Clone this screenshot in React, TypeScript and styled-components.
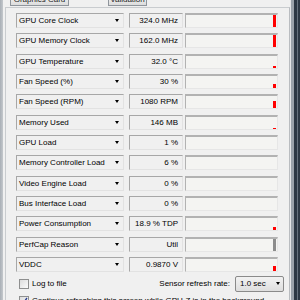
import React from 'react';
import styled, { createGlobalStyle } from 'styled-components';

const GlobalStyle = createGlobalStyle`
  html, body {
    margin: 0;
    padding: 0;
    background: #f0f0f0;
  }
  body {
    font-family: "Liberation Sans", Arial, sans-serif;
    font-size: 8px;
    color: #000;
  }
`;

const Window = styled.div`
  width: 300px;
  height: 300px;
  overflow: hidden;
  display: flex;
  background: #f0f0f0;
`;

const LeftFrame = styled.div`
  width: 3px;
  flex: none;
  background: linear-gradient(to right, #a9afb6, #c4c8cc);
`;

const RightFrame = styled.div`
  width: 10px;
  flex: none;
  display: flex;
`;

const FrameStripe = styled.div<{ $w: number; $c: string }>`
  width: ${(p) => p.$w}px;
  background: ${(p) => p.$c};
`;

const Main = styled.div`
  flex: 1;
  display: flex;
  flex-direction: column;
  padding-left: 2px;
`;

const TabStrip = styled.div`
  height: 7px;
  flex: none;
  display: flex;
  align-items: flex-start;
`;

const Tab = styled.div<{ $left: number; $width: number }>`
  margin-left: ${(p) => p.$left}px;
  width: ${(p) => p.$width}px;
  height: 5px;
  overflow: hidden;
  border: 1px solid #8f959c;
  border-top: none;
  background: linear-gradient(#e9e9e9, #dcdcdc);
  text-align: center;
  font-size: 8px;
`;

const TabText = styled.div`
  line-height: 8px;
  margin-top: -4px;
  color: #222;
`;

const Pane = styled.div`
  flex: 1;
  border-top: 1px solid #c9cccf;
  border-left: 1px solid #c9cccf;
  border-right: 1px solid #b9bcc0;
  padding: 5px 10px 0 10px;
  display: flex;
  flex-direction: column;
`;

const Rows = styled.div`
  display: flex;
  flex-direction: column;
  gap: 5.33px;
`;

const Row = styled.div`
  display: flex;
  height: 15px;
`;

const Sunken = styled.div`
  box-sizing: border-box;
  height: 15px;
  border-style: solid;
  border-width: 1px;
  border-color: #a7a7a7 #e2e2e2 #e2e2e2 #a7a7a7;
`;

const LabelBox = styled(Sunken)`
  width: 108px;
  display: flex;
  align-items: center;
  justify-content: space-between;
  padding: 0 4px 0 2px;
  background: #f0f0f0;
  white-space: nowrap;
`;

const Arrow = styled.span`
  width: 0;
  height: 0;
  border-left: 2.5px solid transparent;
  border-right: 2.5px solid transparent;
  border-top: 3px solid #000;
`;

const ValueBox = styled(Sunken)`
  width: 54px;
  margin-left: 5px;
  display: flex;
  align-items: center;
  justify-content: flex-end;
  padding-right: 4px;
  background: #f0f0f0;
  white-space: nowrap;
`;

const GraphBox = styled(Sunken)`
  width: 93px;
  margin-left: 2px;
  display: flex;
  align-items: flex-end;
  justify-content: flex-end;
  padding-right: 1px;
  background: #f4f4f2;
  border-top-width: 2px;
  border-color: #b2b2b2 #e6e6e6 #e6e6e6 #b2b2b2;
`;

const Bar = styled.div<{ $gray?: boolean }>`
  width: 3px;
  background: ${(p) => (p.$gray ? '#8c8c8c' : '#ff0000')};
`;

const Footer = styled.div`
  margin-top: 4px;
  display: flex;
  flex-direction: column;
  gap: 1px;
  padding-left: 3px;
`;

const FooterRow = styled.div`
  display: flex;
  align-items: center;
  justify-content: space-between;
  height: 16px;
`;

const CheckLabel = styled.label`
  display: flex;
  align-items: center;
  gap: 3px;
  white-space: nowrap;
`;

const CheckBox = styled.span`
  box-sizing: border-box;
  width: 10px;
  height: 10px;
  border: 1px solid #8e8f8f;
  background: linear-gradient(135deg, #dcdcdc, #fbfbfb);
  display: flex;
  align-items: center;
  justify-content: center;
`;

const Refresh = styled.div`
  display: flex;
  align-items: center;
  gap: 5px;
  margin-right: -5px;
`;

const Select = styled.div`
  box-sizing: border-box;
  width: 49px;
  height: 16px;
  border: 1px solid #8a8a8a;
  border-radius: 2px;
  background: linear-gradient(#f2f2f2, #dedede);
  display: flex;
  align-items: center;
  justify-content: space-between;
  padding: 0 3px 0 4px;
`;

const sensors = [
  { label: 'GPU Core Clock', value: '324.0 MHz', bar: 12 },
  { label: 'GPU Memory Clock', value: '162.0 MHz', bar: 12 },
  { label: 'GPU Temperature', value: '32.0 °C', bar: 2 },
  { label: 'Fan Speed (%)', value: '30 %', bar: 4 },
  { label: 'Fan Speed (RPM)', value: '1080 RPM', bar: 7 },
  { label: 'Memory Used', value: '146 MB', bar: 1 },
  { label: 'GPU Load', value: '1 %', bar: 0 },
  { label: 'Memory Controller Load', value: '6 %', bar: 0 },
  { label: 'Video Engine Load', value: '0 %', bar: 0 },
  { label: 'Bus Interface Load', value: '0 %', bar: 0 },
  { label: 'Power Consumption', value: '18.9 % TDP', bar: 3 },
  { label: 'PerfCap Reason', value: 'Util', bar: 12, gray: true },
  { label: 'VDDC', value: '0.9870 V', bar: 5 },
];

const Check = () => (
  <svg width="8" height="8" viewBox="0 0 8 8">
    <path d="M1 4.2 L3 6.5 L7 1" fill="none" stroke="#2b3f8f" strokeWidth="1.4" />
  </svg>
);

const App: React.FC = () => {
  return (
    <Window>
      <GlobalStyle />
      <LeftFrame />
      <Main>
        <TabStrip>
          <Tab $left={5} $width={57}>
            <TabText>Graphics Card</TabText>
          </Tab>
          <Tab $left={39} $width={37}>
            <TabText>Validation</TabText>
          </Tab>
        </TabStrip>
        <Pane>
          <Rows>
            {sensors.map((s) => (
              <Row key={s.label}>
                <LabelBox>
                  <span>{s.label}</span>
                  <Arrow />
                </LabelBox>
                <ValueBox>{s.value}</ValueBox>
                <GraphBox>
                  {s.bar > 0 && <Bar $gray={s.gray} style={{ height: s.bar }} />}
                </GraphBox>
              </Row>
            ))}
          </Rows>
          <Footer>
            <FooterRow>
              <CheckLabel>
                <CheckBox />
                Log to file
              </CheckLabel>
              <Refresh>
                <span>Sensor refresh rate:</span>
                <Select>
                  <span>1.0 sec</span>
                  <Arrow />
                </Select>
              </Refresh>
            </FooterRow>
            <FooterRow>
              <CheckLabel>
                <CheckBox>
                  <Check />
                </CheckBox>
                Continue refreshing this screen while GPU-Z is in the background
              </CheckLabel>
            </FooterRow>
          </Footer>
        </Pane>
      </Main>
      <RightFrame>
        <FrameStripe $w={1} $c="#e4e6e8" />
        <FrameStripe $w={3} $c="#9aa2aa" />
        <FrameStripe $w={3} $c="#2c3844" />
        <FrameStripe $w={1} $c="#66727e" />
        <FrameStripe $w={2} $c="#2c3844" />
      </RightFrame>
    </Window>
  );
};

export default App;
